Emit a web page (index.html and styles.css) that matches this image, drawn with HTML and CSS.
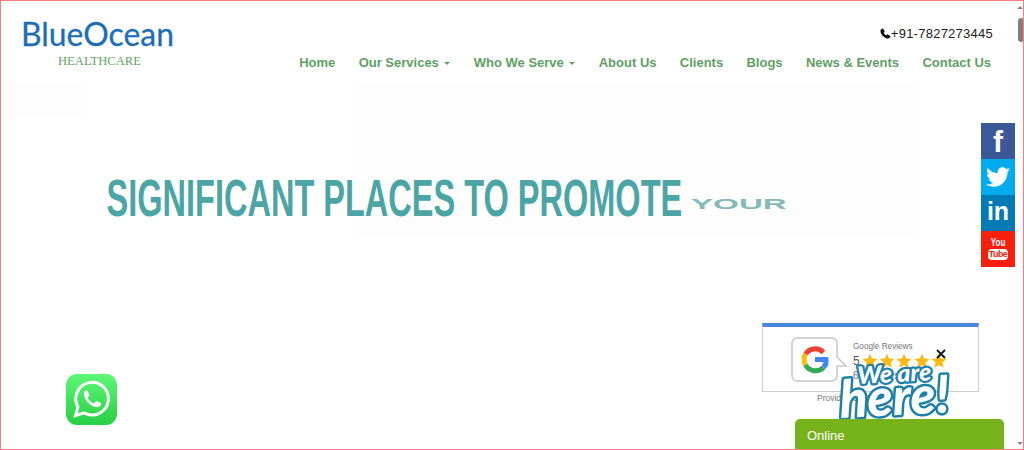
FILE: index.html
```html
<!DOCTYPE html>
<html lang="en">
<head>
<meta charset="utf-8">
<title>BlueOcean Healthcare</title>
<link rel="stylesheet" href="styles.css">
</head>
<body>
<svg class="defs" width="0" height="0" aria-hidden="true">
  <symbol id="star" viewBox="0 0 24 24"><path d="M12 1l3.2 7.4 8 .7-6 5.3 1.800 7.900L12 18.100 5 22.300l1.800-7.900-6-5.300 8-.7z"/></symbol>
</svg>
<header class="site-header">
  <a class="logo" href="#">
    <svg class="logo-art" width="156" height="50" viewBox="0 0 156 50">
      <text class="logo-main" x="0" y="26" textLength="153" lengthAdjust="spacingAndGlyphs">BlueOcean</text>
      <text class="logo-sub" x="37" y="45" textLength="83" lengthAdjust="spacingAndGlyphs">HEALTHCARE</text>
    </svg>
  </a>
  <div class="header-right">
    <div class="phone">
      <svg class="phone-icon" width="11" height="11" viewBox="0 0 24 24"><path d="M6.600 1.500l3.400 5.200c.4.600.2 1.300-.3 1.800L8 10.100c1 2.400 3.400 4.900 5.900 5.900l1.600-1.700c.5-.5 1.200-.7 1.800-.3l5.200 3.400c.6.400.7 1.200.3 1.800-1.200 2-3 3.800-5.300 3.800C10 23 1 14 1 6.500c0-2.300 1.800-4.100 3.800-5.300.6-.4 1.400-.3 1.800.3z"/></svg>
      <span>+91-7827273445</span>
    </div>
    <nav class="nav">
      <a href="#">Home</a>
      <a href="#">Our Services <i class="caret"></i></a>
      <a href="#">Who We Serve <i class="caret"></i></a>
      <a href="#">About Us</a>
      <a href="#">Clients</a>
      <a href="#">Blogs</a>
      <a href="#">News &amp; Events</a>
      <a href="#">Contact Us</a>
    </nav>
  </div>
</header>

<main class="hero">
  <svg class="hero-art" width="684" height="50" viewBox="0 0 684 50">
    <text class="hero-main" transform="translate(0.500 46) scale(.6255 1)">SIGNIFICANT PLACES TO PROMOTE</text>
    <text class="hero-sub" transform="translate(585 39) scale(2.370 1)">YOUR</text>
  </svg>
</main>

<aside class="social">
  <a class="soc soc-fb" href="#">f</a>
  <a class="soc soc-tw" href="#">
    <svg width="24" height="24" viewBox="0 0 24 24"><path fill="#fff" d="M23.900 4.600c-.9.400-1.800.7-2.800.8 1-.6 1.800-1.600 2.200-2.700-1 .6-2 1-3.100 1.200C19.200 2.900 17.900 2.300 16.500 2.300c-2.700 0-4.900 2.200-4.900 4.900 0 .4 0 .8.100 1.100C7.700 8.100 4.100 6.100 1.700 3.100c-.4.700-.7 1.600-.7 2.500 0 1.700.9 3.200 2.200 4.100-.8 0-1.600-.2-2.200-.6v.1c0 2.400 1.700 4.400 3.900 4.800-.4.100-.8.200-1.300.2-.3 0-.6 0-.9-.1.600 2 2.400 3.400 4.600 3.400-1.700 1.300-3.800 2.100-6.100 2.100-.4 0-.8 0-1.200-.1 2.200 1.400 4.800 2.200 7.500 2.200 9.100 0 14-7.500 14-14v-.6c1-.7 1.800-1.600 2.500-2.500z"/></svg>
  </a>
  <a class="soc soc-in" href="#">in</a>
  <a class="soc soc-yt" href="#"><span class="yt-you">You</span><span class="yt-tube">Tube</span></a>
</aside>

<section class="reviews">
  <div class="review-card">
    <svg class="bubble" width="58" height="45" viewBox="0 0 58 45">
      <path class="bubble-line" d="M6 1h35a5 5 0 0 1 5 5v14l9 9H46v10a5 5 0 0 1-5 5H6a5 5 0 0 1-5-5V6a5 5 0 0 1 5-5z"/>
      <g fill="none" stroke-width="5">
        <path stroke="#ea4335" d="M32.500 15.500A11.500 11.500 0 0 0 14.500 17"/>
        <path stroke="#fbbc05" d="M14.500 17a11.500 11.500 0 0 0 0 11"/>
        <path stroke="#34a853" d="M14.500 28a11.500 11.500 0 0 0 18 2.500"/>
        <path stroke="#4285f4" d="M32.500 30.500c2-2 3-4.500 2.500-8H24"/>
      </g>
    </svg>
    <div class="review-info">
      <div class="review-title">Google Reviews</div>
      <div class="review-score">5
        <span class="stars">
          <svg><use href="#star"/></svg><svg><use href="#star"/></svg><svg><use href="#star"/></svg><svg><use href="#star"/></svg><svg><use href="#star"/></svg>
        </span>
      </div>
      <div class="review-count">6 Reviews</div>
    </div>
  </div>
  <div class="review-foot">Provided by Google</div>
</section>

<svg class="here" width="124" height="66" viewBox="0 0 124 66">
  <g transform="rotate(-3 62 33)">
    <text class="here-top" x="24" y="25" textLength="74" lengthAdjust="spacingAndGlyphs">We are</text>
    <text class="here-big" x="5" y="58" textLength="110" lengthAdjust="spacingAndGlyphs">here!</text>
  </g>
</svg>
<svg class="close" width="10" height="10" viewBox="0 0 10 10"><path d="M1 1l8 8M9 1l-8 8"/></svg>

<div class="chat">Online</div>

<a class="whatsapp" href="#">
  <svg width="51" height="51" viewBox="0 0 51 51">
    <defs><linearGradient id="wa" x1="0" y1="0" x2="0" y2="1"><stop offset="0" stop-color="#5ff777"/><stop offset="1" stop-color="#27cf43"/></linearGradient></defs>
    <rect width="51" height="51" rx="11" fill="url(#wa)"/>
    <path fill="none" stroke="#fff" stroke-width="3" d="M9.500 41.500l2.500-8.700a16.300 16.300 0 1 1 6.200 6.100z"/>
    <path fill="#fff" d="M20.500 16.500c-.9 0-2.600 1.500-2.600 4 0 5 7 12.500 13 12.800 2.500 0 4.100-1.800 4.300-3.200.1-.7-.1-1-.5-1.200l-3.700-1.800c-.5-.2-.9-.1-1.200.3l-1.300 1.700c-.3.300-.6.300-1 .2-2.400-1-4.300-2.700-5.500-5-.2-.4-.1-.7.100-1l1.100-1.300c.3-.3.3-.6.200-1l-1.500-3.500c-.2-.6-.7-1-1.300-1z"/>
  </svg>
</a>

<div class="scrollbar"><i class="arrow-up"></i><i class="thumb"></i><i class="arrow-down"></i></div>
<div class="frame"></div>
</body>
</html>
```
FILE: styles.css
```css
* { box-sizing: border-box; }
html, body { margin: 0; height: 450px; overflow: hidden; background: #fff; }
body { font-family: "Liberation Sans", Arial, sans-serif; position: relative; }
a { text-decoration: none; color: inherit; }
.defs { position: absolute; }

.site-header { height: 81px; display: flex; justify-content: space-between; padding: 0 31px 0 21px; }
.logo { padding-top: 20px; }
.logo-art { display: block; overflow: visible; }
.logo-main { font: 400 33px Lato, sans-serif; fill: #1b6fb5; stroke: #1b6fb5; stroke-width: .3px; }
.logo-sub { font: 400 12px "Liberation Serif", serif; fill: #5f9f65; }

.header-right { display: flex; flex-direction: column; align-items: flex-end; padding-top: 26px; }
.phone { display: flex; align-items: center; font-size: 13px; letter-spacing: .25px; color: #222; line-height: 15px; }
.phone-icon { fill: #111; }
.nav { display: flex; gap: 23.300px; margin-top: 14px; margin-right: 2px; font-size: 13px; font-weight: 700; color: #5f9f65; line-height: 16px; }
.caret { display: inline-block; margin-left: 2px; vertical-align: middle; border: 3px solid transparent; border-top-color: #5f9f65; border-bottom: 0; }

.hero {
  height: 369px;
  padding: 89px 0 0 106px;
  background:
    linear-gradient(#fdfdfd, #fdfdfd) 358px 0 / 556px 155px no-repeat,
    linear-gradient(#fdfdfd, #fdfdfd) 0 0 / 82px 38px no-repeat;
}
.hero-art { display: block; overflow: visible; }
.hero-main { font: 700 52px "Liberation Sans", sans-serif; fill: #4ca5a5; }
.hero-sub { font: 700 14px "Liberation Sans", sans-serif; fill: #86b9b2; }

.social { position: absolute; left: 981px; top: 123px; width: 34px; display: flex; flex-direction: column; }
.soc { height: 36px; display: flex; align-items: center; justify-content: center; color: #fff; font-weight: 700; line-height: 1; }
.soc-fb { background: #3b5998; font-size: 30px; padding-top: 1px; }
.soc-tw { background: #00aced; }
.soc-in { background: #007bb6; font-size: 25px; padding-bottom: 3px; }
.soc-yt { background: #f6200c; flex-direction: column; gap: 1px; }
.yt-you { font-size: 10px; transform: scaleX(.8); }
.yt-tube { font-size: 9px; background: #fff; color: #f6200c; border-radius: 4px; padding: 1px 0; width: 20px; letter-spacing: -.6px; text-align: center; overflow: hidden; }

.reviews { position: absolute; left: 762px; top: 323px; width: 217px; color: #777; }
.review-card { height: 69px; display: flex; gap: 4px; border: 1px solid #ccc; border-top: 4px solid #4a86e0; padding: 10px 0 0 28px; }
.bubble { flex: none; }
.bubble-line { fill: #fff; stroke: #c8c8c8; stroke-width: 1.500px; }
.review-info { font-size: 9px; padding-top: 5px; }
.review-title { line-height: 10px; font-size: 8.200px; }
.review-score { display: flex; align-items: center; font-size: 12px; line-height: 14px; margin-top: 1px; color: #555; }
.stars { display: flex; gap: 1px; margin-left: 2px; fill: #fcb813; }
.stars svg { width: 16px; height: 16px; }
.stars svg:not(:last-child) { margin-right: .4px; }
.review-count { font-size: 10px; line-height: 12px; margin-top: 1px; }
.review-foot { font-size: 8.500px; line-height: 12px; padding: 0 0 0 55px; }

.here { position: absolute; left: 834px; top: 357px; overflow: visible; }
.here text { paint-order: stroke; stroke-linejoin: round; fill: #fff; stroke: #1c80ab; font-family: Lato, sans-serif; font-style: italic; font-weight: 900; }
.here-top { font-size: 24px; stroke-width: 4.500px; }
.here-big { font-size: 52px; stroke-width: 5px; }
.close { position: absolute; left: 936px; top: 349px; stroke: #111; stroke-width: 1.800px; }

.chat { position: absolute; left: 795px; top: 419px; width: 209px; height: 31px; background: #76b31b; border-radius: 5px 5px 0 0; padding-left: 12px; color: #fff; font-size: 13px; line-height: 33px; }

.whatsapp { position: absolute; left: 66px; top: 374px; display: block; width: 51px; height: 51px; }
.whatsapp svg { display: block; }

.scrollbar { position: absolute; top: 0; right: 0; width: 7px; height: 450px; background: #fff; }
.thumb { position: absolute; top: 18px; left: 1px; width: 6px; height: 24px; background: #808080; border-radius: 3px; }
.arrow-up, .arrow-down { position: absolute; left: 0; border: 3.500px solid transparent; }
.arrow-up { top: 6px; border-bottom-color: #888; border-top: 0; }
.arrow-down { bottom: 5px; border-top-color: #888; border-bottom: 0; }

.frame { position: absolute; inset: 0; border: 1px solid #fb7d7d; pointer-events: none; }
```
